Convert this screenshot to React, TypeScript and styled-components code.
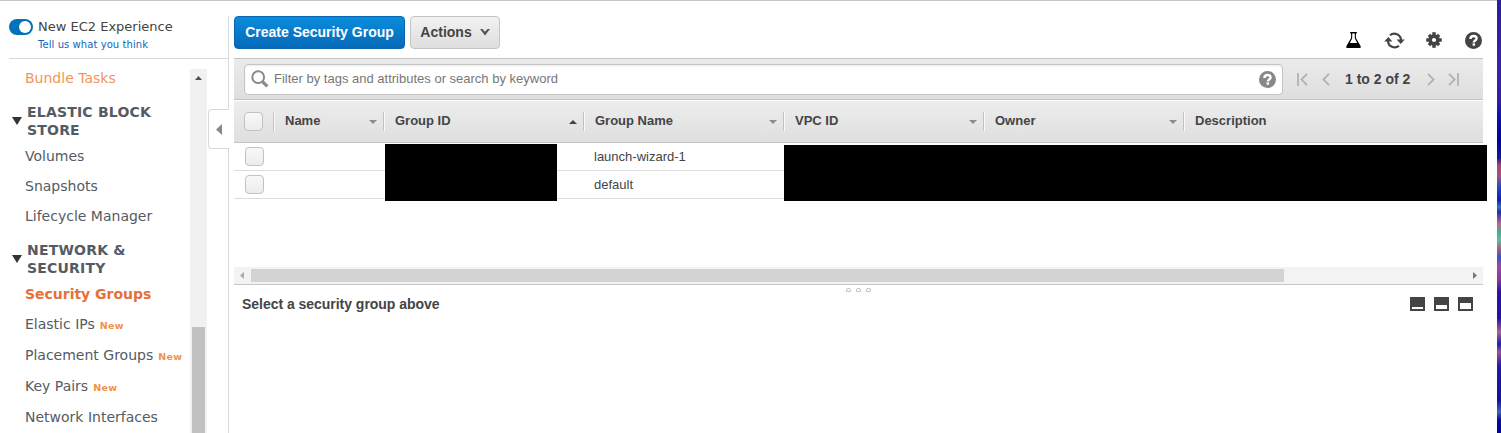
import React from "react";
import styled, { createGlobalStyle, css } from "styled-components";

const Global = createGlobalStyle`
  * { box-sizing: border-box; }
  html, body { margin: 0; padding: 0; background: #fff; overflow: hidden; }
  body { font-family: "Liberation Sans", Arial, sans-serif; font-size: 13px; color: #444; }
  svg { display: block; flex: none; }
`;

const Page = styled.div`
  display: flex;
  width: 1501px;
  height: 433px;
  overflow: hidden;
`;

const Window = styled.div`
  display: flex;
  width: 1497px;
  border-top: 1px solid #c6c6c6;
`;

const Desktop = styled.div`
  flex: 1;
  background: linear-gradient(
    #2a1c9c 0, #3a22a8 60px, #3420a4 100px, #0a10b0 118px, #0000a0 140px, #101a9c 158px,
    #a04878 165px, #a8507c 176px, #1848c8 188px, #1020b8 200px, #2878c0 207px, #1c30a0 212px,
    #c06890 224px, #40b090 232px, #58c0a0 240px, #b05880 249px, #3058c8 257px, #a04898 266px,
    #8a3898 280px, #2c10a8 292px, #2410a8 318px, #b06090 332px, #2020b0 344px, #a05090 352px,
    #2818a8 366px, #1010a0 400px, #3868b8 412px, #0808a0 420px, #0000a0 433px
  );
`;

const Sidebar = styled.nav`
  position: relative;
  width: 229px;
  padding: 15px 0 0 9px;
  font-family: "DejaVu Sans", Verdana, sans-serif;
`;

const Divider = styled.span`
  position: absolute;
  top: 15px;
  bottom: 0;
  right: 0;
  width: 1px;
  background: #d5dbdb;
`;

const Experience = styled.div`
  display: flex;
  height: 43px;
  border-bottom: 1px solid #d5dbdb;
`;

const Toggle = styled.span`
  display: flex;
  justify-content: flex-end;
  width: 24px;
  height: 16px;
  margin-top: 3px;
  padding: 2px;
  border-radius: 8px;
  background: #0073bb;
  &::after {
    content: "";
    width: 12px;
    height: 12px;
    border-radius: 50%;
    background: #fff;
  }
`;

const ExperienceText = styled.div`
  display: flex;
  flex-direction: column;
  margin-left: 5px;
`;

const ExperienceTitle = styled.span`
  font-size: 13px;
  line-height: 22px;
  white-space: nowrap;
`;

const ExperienceLink = styled.a`
  font-size: 10px;
  line-height: 14px;
  letter-spacing: 0.07px;
  color: #1166bb;
  white-space: nowrap;
`;

const NavBody = styled.div`
  display: flex;
  height: 374px;
`;

const NavList = styled.div`
  width: 182px;
`;

const NavItem = styled.div<{ $h?: number; $tone?: "active" | "orange" }>`
  display: flex;
  align-items: center;
  height: ${(p) => p.$h ?? 30}px;
  padding-left: 16px;
  font-size: 14px;
  white-space: nowrap;
  color: #545b64;
  ${(p) => p.$tone === "orange" && css`color: #f2955a;`}
  ${(p) => p.$tone === "active" && css`color: #e7703a; font-weight: bold; letter-spacing: -0.02px;`}
`;

const NewTag = styled.span`
  margin: 3px 0 0 5px;
  font-size: 9.5px;
  font-weight: bold;
  letter-spacing: 0.3px;
  color: #f2914a;
`;

const NavHeading = styled.div<{ $top: number }>`
  display: flex;
  align-items: center;
  gap: 5px;
  margin: ${(p) => p.$top}px 0 2px;
  padding-left: 3px;
  font-size: 14px;
  font-weight: bold;
  line-height: 18px;
  letter-spacing: 0.2px;
  color: #545b64;
`;

const NavScroll = styled.div`
  display: flex;
  flex-direction: column;
  align-items: center;
  width: 17px;
  margin: 10px 0 0 -1px;
  padding-top: 7px;
  background: #f1f1f1;
`;

const NavThumb = styled.span`
  width: 13px;
  height: 106px;
  margin-top: auto;
  background: #c1c1c1;
`;

const Collapse = styled.button`
  position: absolute;
  top: 108px;
  right: 0;
  display: flex;
  align-items: center;
  width: 21px;
  height: 40px;
  padding: 0 0 0 7px;
  border: 1px solid #d5dbdb;
  border-right: 0;
  border-radius: 4px 0 0 4px;
  background: #fff;
`;

const Main = styled.main`
  position: relative;
  width: 1249px;
  margin-left: 5px;
`;

const ActionBar = styled.div`
  display: flex;
  height: 57px;
  padding-top: 15px;
`;

const Button = styled.button<{ $primary?: boolean }>`
  display: flex;
  align-items: center;
  justify-content: center;
  gap: 8px;
  width: ${(p) => (p.$primary ? 171 : 90)}px;
  height: 33px;
  margin-right: 5px;
  padding: 0 0 1px;
  border: 1px solid ${(p) => (p.$primary ? "#0a66b0" : "#c4c4c4")};
  border-radius: 4px;
  background: ${(p) => (p.$primary ? "linear-gradient(#0a8ddd, #0569b8)" : "linear-gradient(#f2f2f2, #dedede)")};
  color: ${(p) => (p.$primary ? "#fff" : "#444")};
  font: bold 14px "Liberation Sans", Arial, sans-serif;
  white-space: nowrap;
`;

const Tools = styled.div`
  display: flex;
  align-items: flex-start;
  margin-left: auto;
  padding: 16px 1px 0 0;
`;

const Tool = styled.span<{ $gap: number }>`
  margin-left: ${(p) => p.$gap}px;
`;

const FilterBar = styled.div`
  display: flex;
  align-items: center;
  height: 42px;
  padding-left: 10px;
  border: solid #c3c3c3;
  border-width: 1px 0;
  background: linear-gradient(#ebebeb, #dedede);
`;

const Search = styled.div`
  display: flex;
  align-items: center;
  width: 1039px;
  height: 31px;
  padding: 0 6px;
  border: 1px solid #c4c4c4;
  border-radius: 4px;
  background: #fff;
  box-shadow: inset 0 1px 2px rgba(0, 0, 0, 0.08);
`;

const Placeholder = styled.span`
  flex: 1;
  margin-left: 5px;
  padding-bottom: 2px;
  font-size: 13px;
  color: #777;
`;

const Pager = styled.div`
  display: flex;
  align-items: center;
  margin-left: 14px;
`;

const PageCount = styled.span`
  width: 66px;
  margin: 0 16px 0 15px;
  font-size: 14px;
  font-weight: bold;
  white-space: nowrap;
`;

const HeadRow = styled.div`
  display: flex;
  align-items: center;
  height: 42px;
  margin-top: 1px;
  padding-left: 10px;
  border-bottom: 1px solid #c3c3c3;
  background: linear-gradient(#ededed, #dfdfdf);
`;

const Checkbox = styled.span`
  width: 19px;
  height: 19px;
  border: 1px solid #c2c2c2;
  border-radius: 4px;
  background: linear-gradient(#f8f8f8, #ececec);
`;

const HeadCell = styled.div<{ $w: number }>`
  display: flex;
  align-items: center;
  justify-content: space-between;
  width: ${(p) => p.$w}px;
  height: 19px;
  padding: 0 6px 0 11px;
  border-left: 1px solid #c2c2c2;
  box-shadow: inset 1px 0 #fafafa;
  font-weight: bold;
  white-space: nowrap;
`;

const HeadLabel = styled.span`
  padding-bottom: 2px;
`;

const HeadCells = styled.div`
  display: flex;
  margin-left: 10px;
`;

const Rows = styled.div`
  height: 124px;
`;

const Row = styled.div`
  display: flex;
  align-items: center;
  height: 28px;
  padding-left: 11px;
  border-bottom: 1px solid #dcdcdc;
`;

const GroupName = styled.span`
  margin-left: 330px;
  font-size: 13px;
`;

const Redaction = styled.span<{ $x: number; $y: number; $w: number; $h: number }>`
  position: absolute;
  left: ${(p) => p.$x}px;
  top: ${(p) => p.$y}px;
  width: ${(p) => p.$w}px;
  height: ${(p) => p.$h}px;
  background: #000;
`;

const TableScroll = styled.div`
  display: flex;
  align-items: center;
  justify-content: space-between;
  height: 18px;
  padding: 0 6px;
  border-bottom: 1px solid #c6c6c6;
  background: #f3f3f3;
`;

const TableThumb = styled.span`
  width: 1033px;
  height: 13px;
  margin: 0 auto 0 7px;
  background: #d3d3d3;
`;

const Grip = styled.div`
  display: flex;
  justify-content: center;
  gap: 5px;
  height: 8px;
  padding-top: 3px;
`;

const GripDot = styled.span`
  width: 5px;
  height: 4px;
  border: 1px solid #c4c4c4;
  border-radius: 2px 2px 0 0;
`;

const Details = styled.div`
  display: flex;
  align-items: center;
  justify-content: space-between;
  height: 22px;
  padding: 0 10px 0 8px;
  font-size: 14px;
  font-weight: bold;
  letter-spacing: -0.03px;
`;

const DetailsTitle = styled.span`
  padding-bottom: 1px;
`;

const Layouts = styled.div`
  display: flex;
  gap: 9px;
`;

const LayoutButton = styled.span<{ $fill: number }>`
  display: flex;
  align-items: flex-end;
  width: 15px;
  height: 14px;
  padding: 2px;
  background: #444;
  &::after {
    content: "";
    width: 11px;
    height: ${(p) => p.$fill}px;
    background: #fff;
  }
`;

type Dir = "up" | "down" | "left" | "right";
const shapes: Record<Dir, string> = {
  up: "0,4 4,0 8,4",
  down: "0,0 8,0 4,4",
  left: "4,0 4,8 0,4",
  right: "0,0 4,4 0,8",
};

const Arrow = ({ dir, color, w, h }: { dir: Dir; color: string; w: number; h: number }) => (
  <svg width={w} height={h} viewBox={dir === "up" || dir === "down" ? "0 0 8 4" : "0 0 4 8"} preserveAspectRatio="none">
    <polygon points={shapes[dir]} fill={color} />
  </svg>
);

const Help = ({ color }: { color: string }) => (
  <svg width="17" height="17" viewBox="0 0 17 17" fill="none">
    <circle cx="8.5" cy="8.5" r="8.5" fill={color} />
    <path d="M5.4 6.9C5.4 4.9 6.7 4 8.5 4s3.1 1 3.1 2.5c0 1.9-2.8 1.9-2.8 3.9" stroke="#fff" strokeWidth="2.4" />
    <rect x="7.6" y="11.4" width="2.5" height="2.3" fill="#fff" />
  </svg>
);

const Chevron = ({ right, bar }: { right?: boolean; bar?: boolean }) => (
  <svg
    width={bar ? 11 : 8}
    height="13"
    viewBox={bar ? "0 0 11 13" : "3 0 8 13"}
    fill="none"
    stroke="#b2b2b2"
    strokeWidth="1.8"
    transform={right ? "scale(-1 1)" : undefined}
  >
    <path d="M10 .8L4.4 6.5 10 12.2" />
    {bar && <path d="M1 0v13" />}
  </svg>
);

const Flask = () => (
  <svg width="15" height="16" viewBox="0 0 15 16">
    <path d="M4.2 0h6.6v1.4h-.9v4.5L14.6 14v2H.4v-2l4.7-8.1V1.4h-.9z" fill="#000" />
    <path d="M6.2 1.4h2.6v4.8L11.2 11H3.8l2.4-4.8z" fill="#fff" />
  </svg>
);

const Refresh = () => (
  <svg width="21" height="17" viewBox="0 0 21 17" fill="none" stroke="#444" strokeWidth="2.2">
    <path d="M6 3.3A6.6 6.6 0 0 1 17 8" />
    <path d="M15 13.7A6.6 6.6 0 0 1 4 9" />
    <path d="M12.6 7.6h8.2L16.7 12z M.2 9.4h8.2L4.3 5z" fill="#444" stroke="none" />
  </svg>
);

const Gear = () => (
  <svg width="16" height="16" viewBox="-8 -8 16 16" fill="#444">
    <circle r="5.8" />
    {[0, 45, 90, 135].map((a) => (
      <rect key={a} x="-1.7" y={a % 90 ? -7.2 : -7.8} width="3.4" height={a % 90 ? 14.4 : 15.6} transform={`rotate(${a})`} />
    ))}
    <circle r="2.1" fill="#fff" />
  </svg>
);

const Magnifier = () => (
  <svg width="18" height="18" viewBox="0 0 18 18" fill="none" stroke="#8a8a8a">
    <circle cx="7.2" cy="7.2" r="5.9" strokeWidth="2" />
    <path d="M11.6 11.8l4.8 4.6" strokeWidth="3.2" />
  </svg>
);

const ActionsArrow = () => (
  <svg width="10" height="7" viewBox="0 0 10 7">
    <path d="M0 0h2.4L5 2.8 7.6 0H10L5 6.4z" fill="#555" />
  </svg>
);

const columns = [
  { label: "Name", width: 110, sort: "down" },
  { label: "Group ID", width: 200, sort: "up" },
  { label: "Group Name", width: 200, sort: "down" },
  { label: "VPC ID", width: 200, sort: "down" },
  { label: "Owner", width: 200, sort: "down" },
  { label: "Description", width: 299 },
] as { label: string; width: number; sort?: Dir }[];

const Heading = ({ top, lines }: { top: number; lines: string[] }) => (
  <NavHeading $top={top}>
    <Arrow dir="down" color="#333" w={10} h={8} />
    <span>
      {lines[0]}
      <br />
      {lines[1]}
    </span>
  </NavHeading>
);

export default function App() {
  return (
    <Page>
      <Global />
      <Window>
        <Sidebar>
          <Divider />
          <Experience>
            <Toggle />
            <ExperienceText>
              <ExperienceTitle>New EC2 Experience</ExperienceTitle>
              <ExperienceLink>Tell us what you think</ExperienceLink>
            </ExperienceText>
          </Experience>
          <NavBody>
            <NavList>
              <NavItem $h={38} $tone="orange">Bundle Tasks</NavItem>
              <Heading top={6} lines={["ELASTIC BLOCK", "STORE"]} />
              <NavItem>Volumes</NavItem>
              <NavItem>Snapshots</NavItem>
              <NavItem>Lifecycle Manager</NavItem>
              <Heading top={10} lines={["NETWORK &", "SECURITY"]} />
              <NavItem $tone="active">Security Groups</NavItem>
              <NavItem>Elastic IPs<NewTag>New</NewTag></NavItem>
              <NavItem $h={31}>Placement Groups<NewTag>New</NewTag></NavItem>
              <NavItem $h={31}>Key Pairs<NewTag>New</NewTag></NavItem>
              <NavItem $h={31}>Network Interfaces</NavItem>
            </NavList>
            <NavScroll>
              <Arrow dir="up" color="#505050" w={7} h={4} />
              <NavThumb />
            </NavScroll>
          </NavBody>
          <Collapse aria-label="Collapse">
            <Arrow dir="left" color="#888" w={6} h={11} />
          </Collapse>
        </Sidebar>
        <Main>
          <ActionBar>
            <Button $primary>Create Security Group</Button>
            <Button>Actions<ActionsArrow /></Button>
            <Tools>
              <Tool $gap={0}><Flask /></Tool>
              <Tool $gap={23}><Refresh /></Tool>
              <Tool $gap={21}><Gear /></Tool>
              <Tool $gap={23}><Help color="#444" /></Tool>
            </Tools>
          </ActionBar>
          <FilterBar>
            <Search>
              <Magnifier />
              <Placeholder>Filter by tags and attributes or search by keyword</Placeholder>
              <Help color="#888" />
            </Search>
            <Pager>
              <Chevron bar />
              <Tool $gap={14}><Chevron /></Tool>
              <PageCount>1 to 2 of 2</PageCount>
              <Chevron right />
              <Tool $gap={13}><Chevron right bar /></Tool>
            </Pager>
          </FilterBar>
          <HeadRow>
            <Checkbox />
            <HeadCells>
              {columns.map((c) => (
                <HeadCell key={c.label} $w={c.width}>
                  <HeadLabel>{c.label}</HeadLabel>
                  {c.sort && <Arrow dir={c.sort} color={c.sort === "up" ? "#444" : "#8c8c8c"} w={8} h={4} />}
                </HeadCell>
              ))}
            </HeadCells>
          </HeadRow>
          <Rows>
            <Row><Checkbox /><GroupName>launch-wizard-1</GroupName></Row>
            <Row><Checkbox /><GroupName>default</GroupName></Row>
          </Rows>
          <Redaction $x={151} $y={143} $w={172} $h={57} />
          <Redaction $x={550} $y={144} $w={703} $h={56} />
          <TableScroll>
            <Arrow dir="left" color="#aaa" w={4} h={7} />
            <TableThumb />
            <Arrow dir="right" color="#777" w={4} h={7} />
          </TableScroll>
          <Grip><GripDot /><GripDot /><GripDot /></Grip>
          <Details>
            <DetailsTitle>Select a security group above</DetailsTitle>
            <Layouts>
              <LayoutButton $fill={2} />
              <LayoutButton $fill={4} />
              <LayoutButton $fill={6} />
            </Layouts>
          </Details>
        </Main>
      </Window>
      <Desktop />
    </Page>
  );
}
